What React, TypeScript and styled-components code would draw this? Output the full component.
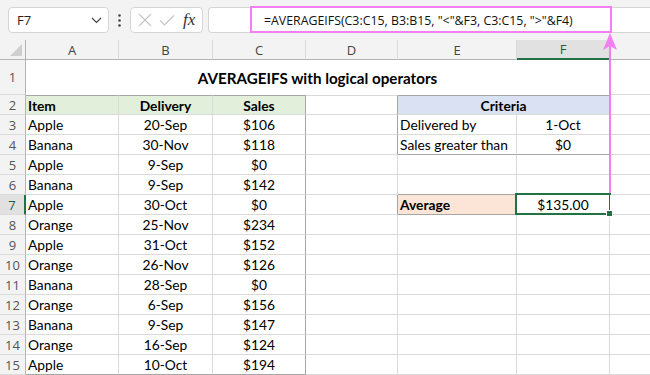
import styled, { createGlobalStyle } from 'styled-components';

const GRID = '#dadada';
const DARK = '#a6a6a6';
const HEAD_LINE = '#b4b4b4';
const GREEN = '#217346';
const PINK = '#f47ff2';

const GlobalStyle = createGlobalStyle`
	body {
		margin: 0;
		background: #ffffff;
		overflow: hidden;
	}
`;

const Frame = styled.div`
	position: relative;
	width: 650px;
	height: 375px;
	overflow: hidden;
	font-family: Lato, 'Liberation Sans', sans-serif;
`;

const Toolbar = styled.div`
	box-sizing: border-box;
	height: 40px;
	display: flex;
	align-items: flex-start;
	padding: 7px 0 0 8px;
	background: #f3f3f3;
`;

const NameBox = styled.div`
	box-sizing: border-box;
	width: 101px;
	height: 26px;
	display: flex;
	align-items: center;
	justify-content: space-between;
	padding: 0 6px 0 8px;
	background: #fff;
	border: 1px solid #d6d6d6;
	border-radius: 4px;
	font-family: 'Open Sans', 'Noto Sans', sans-serif;
	font-size: 13px;
	color: #222;
`;

const Dots = styled.div`
	width: 21px;
	height: 26px;
	display: flex;
	align-items: center;
	justify-content: center;
`;

const FxBox = styled.div`
	box-sizing: border-box;
	width: 73px;
	height: 26px;
	display: flex;
	align-items: center;
	gap: 7px;
	padding: 0 6px 0 7px;
	background: #fff;
	border: 1px solid #d6d6d6;
	border-radius: 4px;
`;

const Fx = styled.span`
	font-family: 'Liberation Serif', serif;
	font-style: italic;
	font-size: 17px;
	color: #333;
	margin-left: 1px;
`;

const FormulaBox = styled.div`
	box-sizing: border-box;
	flex: 1;
	height: 26px;
	margin-left: 5px;
	display: flex;
	align-items: center;
	padding-left: 55px;
	background: #fff;
	border: 1px solid #d6d6d6;
	border-right: none;
	border-radius: 4px 0 0 4px;
	font-family: 'Open Sans', 'Noto Sans', sans-serif;
	font-size: 12.35px;
	color: #111;
	white-space: nowrap;
`;

const Sheet = styled.div`
	display: grid;
	grid-template-columns: 26px 93px 94px 93px 92px 119px 93px 93px;
	grid-template-rows: 20px 35px repeat(14, 20px);
	font-size: 13.8px;
	color: #000;
`;

const Corner = styled.div`
	position: relative;
	box-sizing: border-box;
	background: #f3f3f3;
	border-right: 1px solid ${HEAD_LINE};
	border-bottom: 1px solid ${HEAD_LINE};
	&::after {
		content: '';
		position: absolute;
		right: 3px;
		bottom: 3px;
		width: 0;
		height: 0;
		border-left: 12px solid transparent;
		border-bottom: 12px solid #cfcfcf;
	}
`;

const ColHead = styled.div<{ $active?: boolean }>`
	box-sizing: border-box;
	display: flex;
	align-items: center;
	justify-content: center;
	background: ${(p) => (p.$active ? '#e1e1e1' : '#f3f3f3')};
	border-right: 1px solid ${GRID};
	border-bottom: ${(p) => (p.$active ? `2px solid ${GREEN}` : `1px solid ${HEAD_LINE}`)};
	font-family: 'Open Sans', 'Noto Sans', sans-serif;
	font-size: 13px;
	color: ${(p) => (p.$active ? '#1f5c3a' : '#444')};
`;

const RowHead = styled.div<{ $active?: boolean }>`
	box-sizing: border-box;
	display: flex;
	align-items: center;
	justify-content: center;
	background: ${(p) => (p.$active ? '#e1e1e1' : '#f3f3f3')};
	border-right: ${(p) => (p.$active ? `2px solid ${GREEN}` : `1px solid ${HEAD_LINE}`)};
	border-bottom: 1px solid ${GRID};
	font-family: 'Open Sans', 'Noto Sans', sans-serif;
	font-size: 13px;
	color: ${(p) => (p.$active ? '#1f5c3a' : '#555')};
`;

const Cell = styled.div<{
	$align?: 'left' | 'center';
	$bold?: boolean;
	$bg?: string;
	$r: string;
	$b?: string;
	$t?: string;
	$span?: number;
	$size?: number;
	$selected?: boolean;
}>`
	position: relative;
	box-sizing: border-box;
	display: flex;
	align-items: center;
	justify-content: ${(p) => (p.$align === 'left' ? 'flex-start' : 'center')};
	padding: 0 2px;
	grid-column: span ${(p) => p.$span || 1};
	background: ${(p) => p.$bg || '#fff'};
	border-right: 1px solid ${(p) => p.$r};
	border-bottom: ${(p) => (p.$b ? `1px solid ${p.$b}` : 'none')};
	border-top: ${(p) => (p.$t ? `1px solid ${p.$t}` : 'none')};
	font-weight: ${(p) => (p.$bold ? 700 : 400)};
	${(p) => p.$size && `font-size: ${p.$size}px;`}
	white-space: nowrap;
	${(p) =>
		p.$selected &&
		`
		&::after {
			content: '';
			position: absolute;
			left: -2px;
			top: -2px;
			right: -2px;
			bottom: -1px;
			border: 2px solid ${GREEN};
		}
		&::before {
			content: '';
			position: absolute;
			right: -4px;
			bottom: -3px;
			width: 5px;
			height: 5px;
			background: ${GREEN};
			border: 1px solid #fff;
			z-index: 1;
		}
	`}
`;

const Overlay = styled.svg`
	position: absolute;
	left: 0;
	top: 0;
	pointer-events: none;
`;

// G sits mostly past the right edge, so its letter is not in view
const COLS = ['A', 'B', 'C', 'D', 'E', 'F', ''];

const data: [string, string, string][] = [
	['Apple', '20-Sep', '$106'],
	['Banana', '30-Nov', '$118'],
	['Apple', '9-Sep', '$0'],
	['Banana', '9-Sep', '$142'],
	['Apple', '30-Oct', '$0'],
	['Orange', '25-Nov', '$234'],
	['Apple', '31-Oct', '$152'],
	['Orange', '26-Nov', '$126'],
	['Banana', '28-Sep', '$0'],
	['Orange', '6-Sep', '$156'],
	['Banana', '9-Sep', '$147'],
	['Orange', '16-Sep', '$124'],
	['Apple', '10-Oct', '$194'],
];

type Range = { c1: number; c2: number; r1: number; r2: number };
const outlines: Range[] = [
	{ c1: 1, c2: 3, r1: 2, r2: 15 },
	{ c1: 5, c2: 6, r1: 2, r2: 4 },
	{ c1: 5, c2: 5, r1: 7, r2: 7 },
];

const rightLine = (c: number, r: number) =>
	outlines.some((o) => r >= o.r1 && r <= o.r2 && (c === o.c2 || c + 1 === o.c1)) ? DARK : GRID;
const bottomLine = (c: number, r: number) =>
	outlines.some((o) => c >= o.c1 && c <= o.c2 && (r === o.r2 || r + 1 === o.r1)) ? DARK : GRID;

type Content = { text: string; align?: 'left' | 'center'; bold?: boolean; bg?: string; span?: number };

const contentFor = (c: number, r: number): Content | null => {
	if (r === 2) {
		if (c === 1) return { text: 'Item', align: 'left', bold: true, bg: '#e2efda' };
		if (c === 2) return { text: 'Delivery', bold: true, bg: '#e2efda' };
		if (c === 3) return { text: 'Sales', bold: true, bg: '#e2efda' };
		if (c === 5) return { text: 'Criteria', bold: true, bg: '#d9e1f2', span: 2 };
	}
	if (r >= 3 && c <= 3) {
		const row = data[r - 3];
		return { text: row[c - 1], align: c === 1 ? 'left' : 'center' };
	}
	if (r === 3 && c === 5) return { text: 'Delivered by', align: 'left' };
	if (r === 3 && c === 6) return { text: '1-Oct' };
	if (r === 4 && c === 5) return { text: 'Sales greater than', align: 'left' };
	if (r === 4 && c === 6) return { text: '$0' };
	if (r === 7 && c === 5) return { text: 'Average', align: 'left', bold: true, bg: '#fce4d6' };
	if (r === 7 && c === 6) return { text: '$135.00' };
	return null;
};

const App = () => {
	const body = [];
	for (let r = 1; r <= 15; r++) {
		body.push(
			<RowHead key={`h${r}`} $active={r === 7}>
				{r}
			</RowHead>
		);
		if (r === 1) {
			body.push(
				<Cell key="title" $span={6} $bold $size={15.2} $r={GRID}>
					AVERAGEIFS with logical operators
				</Cell>
			);
			body.push(<Cell key="g1" $r={GRID} $b={GRID} />);
			continue;
		}
		for (let c = 1; c <= 7; c++) {
			if (r === 2 && c === 6) continue;
			const content = contentFor(c, r);
			const span = content?.span || 1;
			const lastCol = c + span - 1;
			body.push(
				<Cell
					key={`${c}-${r}`}
					$span={span}
					$align={content?.align}
					$bold={content?.bold}
					$bg={content?.bg}
					$r={rightLine(lastCol, r)}
					$b={bottomLine(c, r)}
					$t={r === 2 && c <= 6 ? bottomLine(c, 1) : undefined}
					$selected={r === 7 && c === 6}
				>
					{content?.text}
				</Cell>
			);
		}
	}

	return (
		<Frame>
			<GlobalStyle />
			<Toolbar>
				<NameBox>
					<span>F7</span>
					<svg width="11" height="7" viewBox="0 0 11 7">
						<path d="M1 1 L5.5 5.5 L10 1" fill="none" stroke="#444" strokeWidth="1.2" />
					</svg>
				</NameBox>
				<Dots>
					<svg width="3" height="13" viewBox="0 0 3 13">
						<circle cx="1.5" cy="1.5" r="1.3" fill="#444" />
						<circle cx="1.5" cy="6.5" r="1.3" fill="#444" />
						<circle cx="1.5" cy="11.5" r="1.3" fill="#444" />
					</svg>
				</Dots>
				<FxBox>
					<svg width="14" height="14" viewBox="0 0 14 14">
						<path d="M1 1 L13 13 M13 1 L1 13" stroke="#c4c4c4" strokeWidth="1.1" />
					</svg>
					<svg width="16" height="13" viewBox="0 0 16 13">
						<path d="M1 6.5 L5.5 11 L15 1.5" fill="none" stroke="#c4c4c4" strokeWidth="1.1" />
					</svg>
					<Fx>fx</Fx>
				</FxBox>
				<FormulaBox>=AVERAGEIFS(C3:C15, B3:B15, "&lt;"&amp;F3, C3:C15, "&gt;"&amp;F4)</FormulaBox>
			</Toolbar>
			<Sheet>
				<Corner />
				{COLS.map((col, i) => (
					<ColHead key={i} $active={col === 'F'}>
						{col}
					</ColHead>
				))}
				{body}
			</Sheet>
			<Overlay width="650" height="375" viewBox="0 0 650 375">
				<rect x="251" y="7" width="360" height="25" fill="none" stroke={PINK} strokeWidth="2" />
				<line x1="610" y1="44" x2="610" y2="193" stroke={PINK} strokeWidth="2" />
				<polygon points="610,33 603,50 610,46 617,50" fill={PINK} />
			</Overlay>
		</Frame>
	);
};

export default App;
